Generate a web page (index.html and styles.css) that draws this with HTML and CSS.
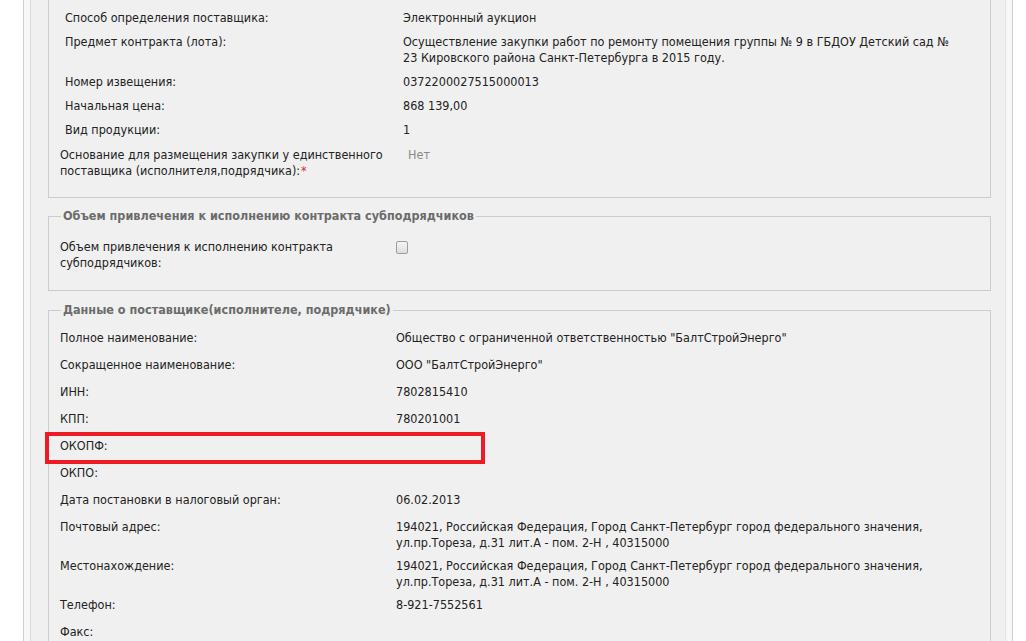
FILE: index.html
```html
<!DOCTYPE html>
<html lang="ru">
<head>
    <meta charset="UTF-8">
    <title>Сведения о контракте</title>
    <link rel="stylesheet" href="styles.css">
</head>
<body>

    <div class="page">
        <div class="panel">

            <!-- Общая информация (верх обрезан) -->
            <fieldset class="group group-cut">
                <div class="rows-inset">
                    <div class="row">
                        <div class="label">Способ определения поставщика:</div>
                        <div class="value">Электронный аукцион</div>
                    </div>
                    <div class="row">
                        <div class="label">Предмет контракта (лота):</div>
                        <div class="value value-narrow">Осуществление закупки работ по ремонту помещения группы № 9 в ГБДОУ Детский сад № 23 Кировского района Санкт-Петербурга в 2015 году.</div>
                    </div>
                    <div class="row">
                        <div class="label">Номер извещения:</div>
                        <div class="value">0372200027515000013</div>
                    </div>
                    <div class="row">
                        <div class="label">Начальная цена:</div>
                        <div class="value">868 139,00</div>
                    </div>
                    <div class="row">
                        <div class="label">Вид продукции:</div>
                        <div class="value">1</div>
                    </div>
                </div>
                <div class="row row-basis">
                    <div class="label">Основание для размещения закупки у единственного поставщика (исполнителя,подрядчика):<span class="req">*</span></div>
                    <div class="value muted">Нет</div>
                </div>
            </fieldset>

            <fieldset class="group">
                <legend>Объем привлечения к исполнению контракта субподрядчиков</legend>
                <div class="row">
                    <div class="label">Объем привлечения к исполнению контракта субподрядчиков:</div>
                    <div class="value"><span class="checkbox"></span></div>
                </div>
            </fieldset>

            <fieldset class="group group-supplier">
                <legend>Данные о поставщике(исполнителе, подрядчике)</legend>
                <div class="row">
                    <div class="label">Полное наименование:</div>
                    <div class="value">Общество с ограниченной ответственностью "БалтСтройЭнерго"</div>
                </div>
                <div class="row">
                    <div class="label">Сокращенное наименование:</div>
                    <div class="value">ООО "БалтСтройЭнерго"</div>
                </div>
                <div class="row">
                    <div class="label">ИНН:</div>
                    <div class="value">7802815410</div>
                </div>
                <div class="row">
                    <div class="label">КПП:</div>
                    <div class="value">780201001</div>
                </div>
                <div class="row row-marked">
                    <div class="label">ОКОПФ:</div>
                    <div class="value"></div>
                    <div class="highlight"></div>
                </div>
                <div class="row">
                    <div class="label">ОКПО:</div>
                    <div class="value"></div>
                </div>
                <div class="row">
                    <div class="label">Дата постановки в налоговый орган:</div>
                    <div class="value">06.02.2013</div>
                </div>
                <div class="row">
                    <div class="label">Почтовый адрес:</div>
                    <div class="value value-address">194021, Российская Федерация, Город Санкт-Петербург город федерального значения, ул.пр.Тореза, д.31 лит.А - пом. 2-Н , 40315000</div>
                </div>
                <div class="row">
                    <div class="label">Местонахождение:</div>
                    <div class="value value-address">194021, Российская Федерация, Город Санкт-Петербург город федерального значения, ул.пр.Тореза, д.31 лит.А - пом. 2-Н , 40315000</div>
                </div>
                <div class="row">
                    <div class="label">Телефон:</div>
                    <div class="value">8-921-7552561</div>
                </div>
                <div class="row">
                    <div class="label">Факс:</div>
                    <div class="value"></div>
                </div>
            </fieldset>

        </div>
    </div>

</body>
</html>
```

FILE: styles.css
```css
/* Reset */
* {
    margin: 0;
    padding: 0;
    box-sizing: border-box;
}

body {
    font-family: 'DejaVu Sans Condensed', 'DejaVu Sans', Tahoma, sans-serif;
    font-stretch: semi-condensed;
    font-size: 12.5px;
    line-height: 16px;
    color: #222;
    background-color: #fff;
    overflow: hidden;
}

/* Outer frame */
.page {
    margin: 0 13px 0 23px;
    border: 1px solid #cfcfcf;
    border-top: none;
    background-color: #f7f7f7;
    padding: 0 6px;
    min-height: 641px;
}

.panel {
    background-color: #f0f0f0;
    border-left: 1px solid #dadada;
    border-right: 1px solid #e4e4e4;
    padding: 0 14px 0 17px;
    min-height: 641px;
}

/* Fieldsets */
.group {
    border: 1px solid #cccccc;
    padding: 11px 11px 16px 11px;
    margin-top: 10px;
}

.group legend {
    padding: 0 2px;
    margin-left: 1px;
    font-weight: bold;
    color: #6b6b6b;
}

.group-cut {
    border-top: none;
    margin-top: 0;
    padding: 6px 11px 18px 11px;
}

.group-supplier {
    border-bottom: none;
    margin-top: 11px;
    padding-top: 8px;
}

/* Rows */
.row {
    display: grid;
    grid-template-columns: 336px 1fr;
    padding: 4px 0 3px;
    min-height: 27px;
}

.rows-inset .row {
    grid-template-columns: 338px 1fr;
    padding: 4px 0 4px 5px;
    min-height: 0;
}

.row-basis {
    padding: 5px 0 0;
}

.row-basis .value {
    padding-left: 12px;
}

.label {
    padding-right: 6px;
}

.value-narrow {
    max-width: 560px;
}

.value-address {
    max-width: 540px;
}

.muted {
    color: #8a8a8a;
}

.req {
    color: #e0262b;
    margin-left: 1px;
}

/* Fake checkbox */
.checkbox {
    display: block;
    width: 12px;
    height: 13px;
    margin-top: 2px;
    border: 1px solid #9d9d9d;
    border-radius: 2px;
    background: linear-gradient(#f4f4f4, #dedede);
}

/* Red annotation frame */
.row-marked {
    position: relative;
}

.highlight {
    position: absolute;
    left: -15px;
    top: -2px;
    width: 440px;
    height: 32px;
    border: 4px solid #ed1c24;
}
```
